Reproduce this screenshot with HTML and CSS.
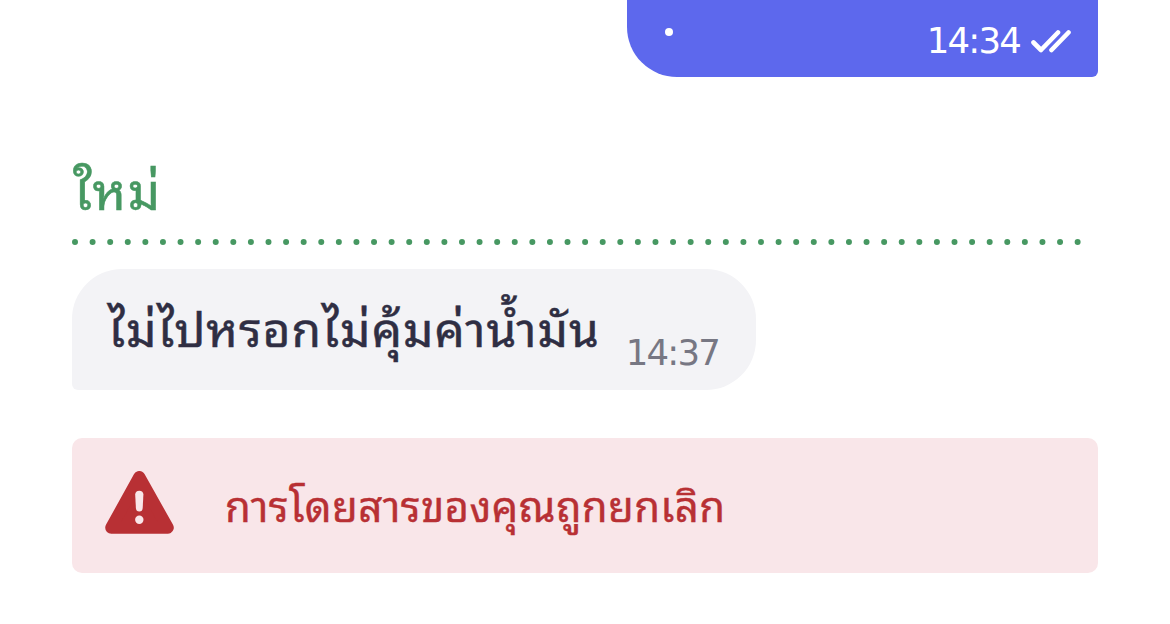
FILE: index.html
```html
<!DOCTYPE html>
<html lang="th">
<head>
<meta charset="UTF-8">
<meta name="viewport" content="width=device-width, initial-scale=1.0">
<title>แชท</title>
<link rel="stylesheet" href="styles.css">
</head>
<body>
<div class="chat">
    <div class="message sent">
        <span class="dot"></span>
        <span class="time">14:34</span>
        <svg class="ticks" width="42" height="24" viewBox="0 0 42 24">
            <path d="M3.500 13.500L11 21L28 3.500M21.500 21L38.500 3.500"/>
        </svg>
    </div>
    <div class="new-label"><span>ใหม่</span></div>
    <svg class="divider" width="1026" height="6" viewBox="0 0 1026 6">
        <line x1="3" y1="3" x2="1006" y2="3"/>
    </svg>
    <div class="message received">
        <span class="text">ไม่ไปหรอกไม่คุ้มค่าน้ำมัน</span>
        <span class="time">14:37</span>
    </div>
    <div class="alert">
        <svg class="alert-icon" width="70" height="64" viewBox="0 0 70 64">
            <path class="triangle" d="M34.300 6L62.800 56.700H6.200Z"/>
            <path class="mark" d="M30.200 23.500Q30.400 19.700 34.300 19.700T38.400 23.500L37.700 37Q37.500 40.500 34.300 40.500T30.900 37Z"/>
            <circle class="mark" cx="34.300" cy="48.800" r="4.200"/>
        </svg>
        <span class="alert-text">การโดยสารของคุณถูกยกเลิก</span>
    </div>
</div>
</body>
</html>
```

FILE: styles.css
```css
body {
    margin: 0;
    background: #fff;
    font-family: Lato, "Noto Sans Thai Looped", Loma, Garuda, Waree, Umpush, "Noto Serif Thai", sans-serif;
}
.chat {
    display: flex;
    flex-direction: column;
    align-items: flex-start;
    padding: 0 72px;
}
.message {
    display: flex;
    box-sizing: border-box;
}
.sent {
    align-self: flex-end;
    width: 471px;
    height: 77px;
    padding: 17px 26px 0 38px;
    background: #5d68ed;
    color: #fff;
    border-radius: 0 0 6px 50px;
}
.dot {
    width: 8px;
    height: 8px;
    margin: 11px auto 0 0;
    border-radius: 50%;
    background: #fff;
}
.time {
    padding: 1px 1px 0 0;
    font-family: "DejaVu Sans", sans-serif;
    font-size: 35.500px;
    line-height: 46px;
    letter-spacing: -1.800px;
}
.ticks {
    margin: 12px 0 0 9px;
    padding-right: 0;
    fill: none;
    stroke: #fff;
    stroke-width: 4.600;
    stroke-linecap: round;
    stroke-linejoin: round;
}
.new-label {
    height: 78px;
    margin-top: 84px;
    padding-left: 1px;
    color: #479862;
    font-size: 51px;
    line-height: 60px;
    letter-spacing: 1.500px;
    -webkit-text-stroke: .5px #479862;
}
.divider {
    stroke: #479862;
    stroke-width: 6;
    stroke-linecap: round;
    stroke-dasharray: 0 17.590;
}
.received {
    width: 684px;
    height: 121px;
    margin-top: 24px;
    padding: 30px 36px 0;
    background: #f3f3f6;
    border-radius: 50px 50px 50px 6px;
}
.text {
    color: #2f2e43;
    font-size: 48px;
    line-height: 60px;
    letter-spacing: .950px;
    white-space: nowrap;
    -webkit-text-stroke: .5px #2f2e43;
}
.received .time {
    margin: 30px 0 0 auto;
    color: #777783;
}
.alert {
    display: flex;
    box-sizing: border-box;
    width: 1026px;
    height: 135px;
    margin-top: 48px;
    padding: 33px;
    background: #f9e6e9;
    border-radius: 10px;
}
.triangle {
    fill: #b83034;
    stroke: #b83034;
    stroke-width: 12;
    stroke-linejoin: round;
}
.mark {
    fill: #f9e6e9;
}
.alert-text {
    margin-left: 50px;
    color: #b83034;
    font-size: 42px;
    line-height: 70px;
    letter-spacing: .350px;
    white-space: nowrap;
    -webkit-text-stroke: .4px #b83034;
}
```
